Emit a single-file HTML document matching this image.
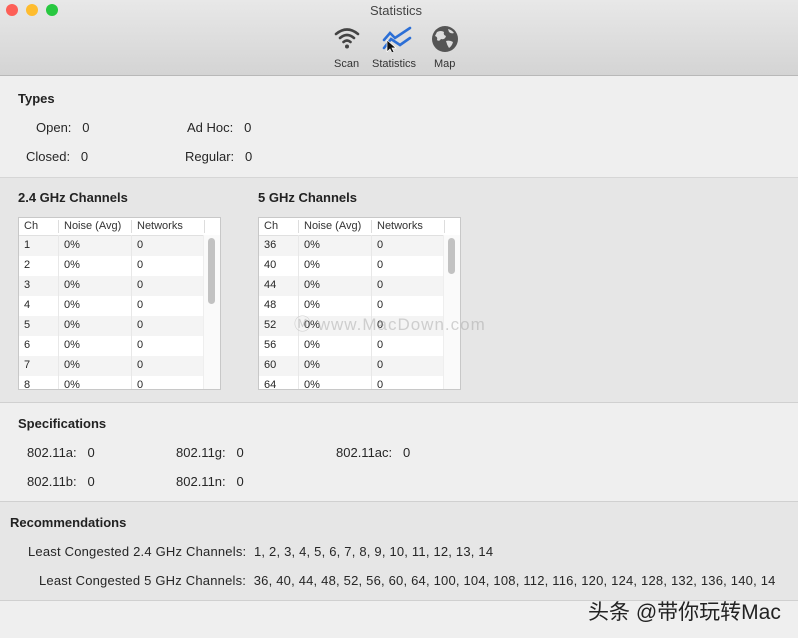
<!DOCTYPE html><html><head><style>
body{margin:0;width:798px;height:638px;overflow:hidden;font-family:"Liberation Sans",sans-serif;color:#262626;font-size:13px;position:relative;background:#efefef}
.a{position:absolute;white-space:nowrap}
.b{font-weight:bold;font-size:13px;color:#222}
.sec{position:absolute;left:0;width:798px}
.tbl{position:absolute;top:217px;width:203px;height:173px;background:#fff;border:1px solid #c8c8c8;box-sizing:border-box;overflow:hidden;font-size:11px}
.hd{height:17px;border-bottom:1px solid #e0e0e0;position:relative}
.row{height:20px;position:relative}
.row:nth-child(odd){background:#f4f4f4}
.c{position:absolute;top:3px}
.hd .c{top:2px;color:#333}
.sep{position:absolute;top:2px;width:1px;height:13px;background:#ddd}
.vs{position:absolute;top:17px;width:1px;height:160px;background:#e8e8e8}
.sb{position:absolute;right:0;top:17px;width:16px;height:160px;background:#fafafa;border-left:1px solid #eee}
.th{position:absolute;left:4px;width:7px;border-radius:4px;background:#c2c2c2;top:3px}
.ls{letter-spacing:.2px}
</style></head><body>
<div class="sec" style="top:0;height:75px;background:linear-gradient(#e8e8e8,#d4d4d4);border-bottom:1px solid #b8b8b8"></div>
<div class="a" style="left:6px;top:4px;width:12px;height:12px;border-radius:6px;background:#fd5f57"></div>
<div class="a" style="left:26px;top:4px;width:12px;height:12px;border-radius:6px;background:#febc2e"></div>
<div class="a" style="left:46px;top:4px;width:12px;height:12px;border-radius:6px;background:#28c840"></div>
<div class="a" style="left:370px;top:3px;font-size:13px;color:#444">Statistics</div>
<svg class="a" style="left:333px;top:26px" width="28" height="24" viewBox="0 0 28 24"><g fill="none" stroke="#444" stroke-width="2.6" stroke-linecap="round"><path d="M3 8Q14 -1 25 8"/><path d="M7 12Q14 6 21 12"/><path d="M10.5 16Q14 13 17.5 16"/></g><circle cx="14" cy="20.5" r="2" fill="#444"/></svg>
<svg class="a" style="left:380px;top:26px" width="34" height="26" viewBox="0 0 34 26"><g fill="none" stroke="#2c6fd6" stroke-width="2.6" stroke-linecap="round"><path d="M4 14L10 7L15 12L30 2"/><path d="M4 22L11 13L20 19L30 12"/></g><path d="M7 14l0 12l3-3l2 4l2-1l-2-4l4 0z" fill="#111" stroke="#fff" stroke-width=".7"/></svg>
<svg class="a" style="left:431px;top:25px" width="28" height="28" viewBox="0 0 28 28"><circle cx="14" cy="14" r="13" fill="#555"/><path d="M6 7q4-2 7 0q-1 3 2 4q-1 4-5 3q-2 3-4 1q1-3-2-4z M17 4q4 1 6 4q-3 1-5-1z M15 16q4-1 7 1q-1 4-4 6q-2-3-3-7z" fill="#ddd"/></svg>
<div class="a" style="left:334px;top:58px;font-size:11px;color:#333">Scan</div>
<div class="a" style="left:372px;top:58px;font-size:11px;color:#333">Statistics</div>
<div class="a" style="left:434px;top:58px;font-size:11px;color:#333">Map</div>

<div class="sec" style="top:76px;height:101px;background:#efefef;border-bottom:1px solid #d6d6d6"></div>
<div class="a b" style="left:18px;top:91px">Types</div>
<div class="a" style="left:36px;top:120px">Open:&nbsp;&nbsp; 0</div>
<div class="a" style="left:187px;top:120px">Ad Hoc:&nbsp;&nbsp; 0</div>
<div class="a" style="left:26px;top:149px">Closed:&nbsp;&nbsp; 0</div>
<div class="a" style="left:185px;top:149px">Regular:&nbsp;&nbsp; 0</div>

<div class="sec" style="top:178px;height:224px;background:#e6e6e6;border-bottom:1px solid #d0d0d0"></div>
<div class="a b" style="left:18px;top:190px">2.4 GHz Channels</div>
<div class="a b" style="left:258px;top:190px">5 GHz Channels</div>

<div class="tbl" style="left:18px">
<div class="hd"><span class="c" style="left:5px">Ch</span><span class="sep" style="left:39px"></span><span class="c" style="left:45px">Noise (Avg)</span><span class="sep" style="left:112px"></span><span class="c" style="left:118px">Networks</span><span class="sep" style="left:185px"></span></div>
<div><div class="row"><span class="c" style="left:5px">1</span><span class="c" style="left:45px">0%</span><span class="c" style="left:118px">0</span></div><div class="row"><span class="c" style="left:5px">2</span><span class="c" style="left:45px">0%</span><span class="c" style="left:118px">0</span></div><div class="row"><span class="c" style="left:5px">3</span><span class="c" style="left:45px">0%</span><span class="c" style="left:118px">0</span></div><div class="row"><span class="c" style="left:5px">4</span><span class="c" style="left:45px">0%</span><span class="c" style="left:118px">0</span></div><div class="row"><span class="c" style="left:5px">5</span><span class="c" style="left:45px">0%</span><span class="c" style="left:118px">0</span></div><div class="row"><span class="c" style="left:5px">6</span><span class="c" style="left:45px">0%</span><span class="c" style="left:118px">0</span></div><div class="row"><span class="c" style="left:5px">7</span><span class="c" style="left:45px">0%</span><span class="c" style="left:118px">0</span></div><div class="row"><span class="c" style="left:5px">8</span><span class="c" style="left:45px">0%</span><span class="c" style="left:118px">0</span></div></div>
<span class="vs" style="left:39px"></span><span class="vs" style="left:112px"></span>
<div class="sb"><div class="th" style="height:66px"></div></div>
</div>

<div class="tbl" style="left:258px">
<div class="hd"><span class="c" style="left:5px">Ch</span><span class="sep" style="left:39px"></span><span class="c" style="left:45px">Noise (Avg)</span><span class="sep" style="left:112px"></span><span class="c" style="left:118px">Networks</span><span class="sep" style="left:185px"></span></div>
<div><div class="row"><span class="c" style="left:5px">36</span><span class="c" style="left:45px">0%</span><span class="c" style="left:118px">0</span></div><div class="row"><span class="c" style="left:5px">40</span><span class="c" style="left:45px">0%</span><span class="c" style="left:118px">0</span></div><div class="row"><span class="c" style="left:5px">44</span><span class="c" style="left:45px">0%</span><span class="c" style="left:118px">0</span></div><div class="row"><span class="c" style="left:5px">48</span><span class="c" style="left:45px">0%</span><span class="c" style="left:118px">0</span></div><div class="row"><span class="c" style="left:5px">52</span><span class="c" style="left:45px">0%</span><span class="c" style="left:118px">0</span></div><div class="row"><span class="c" style="left:5px">56</span><span class="c" style="left:45px">0%</span><span class="c" style="left:118px">0</span></div><div class="row"><span class="c" style="left:5px">60</span><span class="c" style="left:45px">0%</span><span class="c" style="left:118px">0</span></div><div class="row"><span class="c" style="left:5px">64</span><span class="c" style="left:45px">0%</span><span class="c" style="left:118px">0</span></div></div>
<span class="vs" style="left:39px"></span><span class="vs" style="left:112px"></span>
<div class="sb"><div class="th" style="height:36px"></div></div>
</div>
<div class="a" style="left:294px;top:310px;font-size:17px;color:rgba(160,160,160,.45);letter-spacing:1px">Ⓜ www.MacDown.com</div>

<div class="sec" style="top:403px;height:98px;background:#efefef;border-bottom:1px solid #d0d0d0"></div>
<div class="a b" style="left:18px;top:416px">Specifications</div>
<div class="a" style="left:27px;top:445px">802.11a:&nbsp;&nbsp; 0</div>
<div class="a" style="left:176px;top:445px">802.11g:&nbsp;&nbsp; 0</div>
<div class="a" style="left:336px;top:445px">802.11ac:&nbsp;&nbsp; 0</div>
<div class="a" style="left:27px;top:474px">802.11b:&nbsp;&nbsp; 0</div>
<div class="a" style="left:176px;top:474px">802.11n:&nbsp;&nbsp; 0</div>

<div class="sec" style="top:502px;height:98px;background:#e6e6e6;border-bottom:1px solid #d0d0d0"></div>
<div class="a b" style="left:10px;top:515px">Recommendations</div>
<div class="a ls" style="left:28px;top:544px">Least Congested 2.4 GHz Channels:&nbsp; 1, 2, 3, 4, 5, 6, 7, 8, 9, 10, 11, 12, 13, 14</div>
<div class="a ls" style="left:39px;top:573px">Least Congested 5 GHz Channels:&nbsp; 36, 40, 44, 48, 52, 56, 60, 64, 100, 104, 108, 112, 116, 120, 124, 128, 132, 136, 140, 14</div>
<div class="a" style="left:588px;top:596px;font-size:21px;color:#222;font-family:'Liberation Sans','Noto Sans CJK SC',sans-serif">头条 @带你玩转Mac</div>
</body></html>
